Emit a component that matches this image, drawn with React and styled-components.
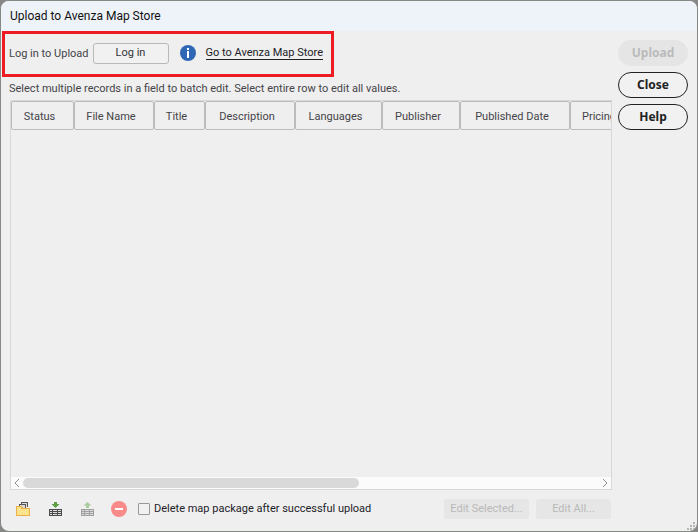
import React from "react";
import styled, { createGlobalStyle } from "styled-components";

const GlobalStyle = createGlobalStyle`
  *, *::before, *::after { box-sizing: border-box; }
  body {
    margin: 0;
    background: #858885;
    font-family: Roboto, "Noto Sans", sans-serif;
    font-size: 11px;
    line-height: 16px;
    color: #444448;
  }
  button, input { font: inherit; }
`;

const Dialog = styled.main`
  position: relative;
  display: flex;
  flex-direction: column;
  height: 100vh;
  min-height: 320px;
  border: 1px solid #858885;
  border-radius: 9px;
  background: #efefef;
  overflow: hidden;
`;

const TitleBar = styled.header`
  flex: none;
  height: 30px;
  padding: 0 9px;
  background: #eef3f9;
`;

const Title = styled.h1`
  margin: 0;
  font-size: 12px;
  font-weight: 400;
  line-height: 30px;
  color: #111;
`;

const Body = styled.div`
  flex: 1;
  min-height: 0;
  display: flex;
  gap: 6px;
  padding: 0 9px 0 1px;
`;

const Main = styled.section`
  flex: 1;
  min-width: 0;
  display: flex;
  flex-direction: column;
`;

const LoginBar = styled.div`
  align-self: flex-start;
  flex: none;
  display: flex;
  align-items: center;
  height: 46px;
  padding: 0 8px 2px 4px;
  border: 3px solid #ed1c24;
  white-space: nowrap;
`;

const LoginLabel = styled.span`
  padding-top: 2px;
`;

const LoginButton = styled.button`
  width: 76px;
  height: 21px;
  margin: 0 11px 0 4px;
  padding: 0;
  border: 1px solid #b8b8b8;
  border-radius: 3px;
  background: #f1f1f1;
  color: #333338;
`;

const StoreLink = styled.a`
  margin-left: 10px;
  border-bottom: 1px solid #222;
  line-height: 13px;
  color: #222228;
  text-decoration: none;
`;

const Hint = styled.p`
  flex: none;
  margin: 4px 0 3px 7px;
  white-space: nowrap;
`;

const Records = styled.div`
  flex: 1;
  min-height: 0;
  display: flex;
  flex-direction: column;
  margin-left: 8px;
  border: 1px solid #d8d8d8;
`;

const Viewport = styled.div`
  flex: 1;
  min-height: 0;
  overflow: hidden;
`;

const Table = styled.table`
  table-layout: fixed;
  width: 623px;
  border-collapse: separate;
  border-spacing: 0;
`;

const HeaderCell = styled.th`
  width: ${(p) => p.$width}px;
  height: 29px;
  padding: 2px 6px 0 0;
  border: 1px solid #bcbcbc;
  border-radius: 2px;
  font-weight: 400;
  text-align: center;
  white-space: nowrap;
`;

const ScrollBar = styled.div`
  flex: none;
  display: flex;
  align-items: center;
  height: 12px;
  background: #fbfbfb;
`;

const ScrollButton = styled.button`
  flex: none;
  display: flex;
  align-items: center;
  justify-content: center;
  width: 12px;
  height: 12px;
  padding: 0;
  border: 0;
  background: none;
`;

const Track = styled.div`
  flex: 1;
`;

const Thumb = styled.div`
  width: calc(100% * 7 / 12);
  height: 10px;
  border-radius: 5px;
  background: #d9d9d9;
`;

const Footer = styled.footer`
  flex: none;
  display: flex;
  align-items: center;
  height: 41px;
  padding: 0 1px 4px 13px;
`;

const Tools = styled.div`
  display: flex;
  gap: 16px;
`;

const ToolButton = styled.button`
  display: flex;
  width: 16px;
  height: 16px;
  padding: 0;
  border: 0;
  background: none;
  svg { flex: none; }
`;

const CheckLabel = styled.label`
  display: flex;
  align-items: center;
  gap: 4px;
  margin-left: 11px;
  color: #222228;
  white-space: nowrap;
`;

const CheckBox = styled.input`
  appearance: none;
  width: 12px;
  height: 12px;
  margin: 0;
  border: 1px solid #999;
  border-radius: 1px;
  background: #f1f1f1;
  &:checked { background: #2f67b5; }
`;

const EditActions = styled.div`
  display: flex;
  gap: 7px;
  margin-left: auto;
`;

const EditButton = styled.button`
  width: ${(p) => p.$width}px;
  height: 20px;
  padding: 0;
  border: 0;
  border-radius: 3px;
  background: #e6e6e6;
  color: #b9b9b9;
  white-space: nowrap;
`;

const Side = styled.aside`
  flex: none;
  display: flex;
  flex-direction: column;
  gap: 6px;
  width: 70px;
  padding-top: 9px;
`;

const PillButton = styled.button`
  height: 26px;
  padding: 0;
  border: 1px solid #222;
  border-radius: 13px;
  background: #f1f1f1;
  color: #222;
  font-family: "Noto Sans", sans-serif;
  font-size: 12px;
  font-weight: 700;
  &:disabled {
    border-color: #e5e5e5;
    background: #e5e5e5;
    color: #bababa;
  }
`;

const Grip = styled.svg`
  position: absolute;
  right: 2px;
  bottom: 1px;
`;

const columns = [
  ["Status", 63],
  ["File Name", 80],
  ["Title", 51],
  ["Description", 90],
  ["Languages", 87],
  ["Publisher", 78],
  ["Published Date", 110],
  ["Pricing", 64],
];

function InfoIcon() {
  return (
    <svg width="16" height="16" viewBox="0 0 16 16" role="img" aria-label="Information">
      <circle cx="8" cy="8" r="8" fill="#2f67b5" />
      <path d="M7 3h2v2H7zM7 6h2v7H7z" fill="#fff" />
    </svg>
  );
}

function FoldersIcon() {
  return (
    <svg width="16" height="16" viewBox="0 0 16 16" shapeRendering="crispEdges">
      <path d="M6 1h7v5H6z" fill="#555" />
      <path d="M7 2h5v4H7z" fill="#dcdcdc" />
      <path d="M4 3h7v4H4z" fill="#555" />
      <path d="M5 4h5v3H5z" fill="#dcdcdc" />
      <path d="M1 5h5l2 2h7v8H1z" fill="#efae48" />
      <path d="M2 6h4v2h8v6H2z" fill="#f7e48c" />
    </svg>
  );
}

function TableArrowIcon({ up }) {
  return (
    <svg width="16" height="16" viewBox="0 0 16 16">
      <path
        d={up ? "M8.500 1l4 3.500H10V7H7V4.500H4.500z" : "M7 1h3v2h2.500l-4 4-4-4H7z"}
        fill={up ? "#a9cca0" : "#5a9e43"}
      />
      <path d="M2 8h13v7H2z" fill={up ? "#a0a0a0" : "#4b4b4b"} />
      <path
        d="M3 9.500h2M6 9.500h4M11 9.500h3M3 11.500h2M6 11.500h4M11 11.500h3M3 13.500h2M6 13.500h4M11 13.500h3"
        stroke="#dedede"
      />
    </svg>
  );
}

function RemoveIcon() {
  return (
    <svg width="16" height="16" viewBox="0 0 16 16">
      <circle cx="8" cy="8" r="8" fill="#f88a8a" />
      <path d="M4 7h8v2H4z" fill="#fff" />
    </svg>
  );
}

function Chevron({ right }) {
  return (
    <svg width="6" height="8" viewBox="0 0 6 8" fill="none" stroke="#929292">
      <path d={right ? "M1 0l4 4-4 4" : "M5 0L1 4l4 4"} />
    </svg>
  );
}

export default function App() {
  return (
    <>
      <GlobalStyle />
      <Dialog>
        <TitleBar>
          <Title>Upload to Avenza Map Store</Title>
        </TitleBar>
        <Body>
          <Main>
            <LoginBar>
              <LoginLabel>Log in to Upload</LoginLabel>
              <LoginButton type="button">Log in</LoginButton>
              <InfoIcon />
              <StoreLink href="#store">Go to Avenza Map Store</StoreLink>
            </LoginBar>
            <Hint>Select multiple records in a field to batch edit. Select entire row to edit all values.</Hint>
            <Records>
              <Viewport>
                <Table>
                  <thead>
                    <tr>
                      {columns.map(([name, width]) => (
                        <HeaderCell key={name} scope="col" $width={width}>{name}</HeaderCell>
                      ))}
                    </tr>
                  </thead>
                </Table>
              </Viewport>
              <ScrollBar>
                <ScrollButton type="button" aria-label="Scroll left"><Chevron /></ScrollButton>
                <Track><Thumb /></Track>
                <ScrollButton type="button" aria-label="Scroll right"><Chevron right /></ScrollButton>
              </ScrollBar>
            </Records>
            <Footer>
              <Tools>
                <ToolButton type="button" aria-label="Open map packages"><FoldersIcon /></ToolButton>
                <ToolButton type="button" aria-label="Import table"><TableArrowIcon /></ToolButton>
                <ToolButton type="button" aria-label="Export table" disabled><TableArrowIcon up /></ToolButton>
                <ToolButton type="button" aria-label="Remove" disabled><RemoveIcon /></ToolButton>
              </Tools>
              <CheckLabel>
                <CheckBox type="checkbox" />
                Delete map package after successful upload
              </CheckLabel>
              <EditActions>
                <EditButton type="button" disabled $width={85}>Edit Selected...</EditButton>
                <EditButton type="button" disabled $width={75}>Edit All...</EditButton>
              </EditActions>
            </Footer>
          </Main>
          <Side>
            <PillButton type="button" disabled>Upload</PillButton>
            <PillButton type="button">Close</PillButton>
            <PillButton type="button">Help</PillButton>
          </Side>
        </Body>
        <Grip width="8" height="8" viewBox="0 0 8 8" fill="#b5b5b5" aria-hidden="true">
          <path d="M6 0h2v2H6zM3 3h2v2H3zM6 3h2v2H6zM0 6h2v2H0zM3 6h2v2H3zM6 6h2v2H6z" />
        </Grip>
      </Dialog>
    </>
  );
}
